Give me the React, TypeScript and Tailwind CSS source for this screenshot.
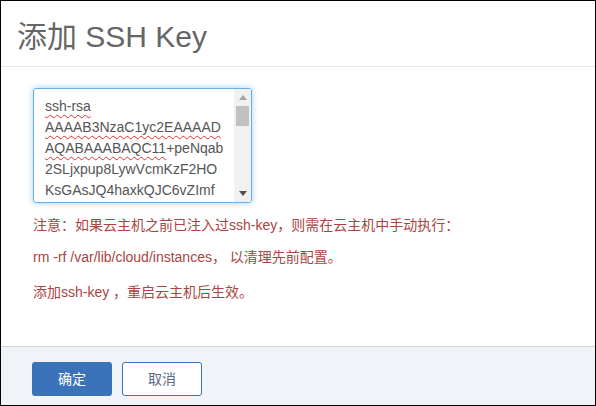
import React from "react";

const keyLines = [
  { squiggle: "ssh-rsa", rest: "" },
  { squiggle: "AAAAB3NzaC1yc2EAAAAD", rest: "" },
  { squiggle: "AQABAAABAQC11", rest: "+peNqab" },
  { squiggle: "", rest: "2SLjxpup8LywVcmKzF2HO" },
  { squiggle: "", rest: "KsGAsJQ4haxkQJC6vZImf" },
  { squiggle: "", rest: "dm0oh6Y7ZwuJF8bzSumDakk" },
];

function KeyField() {
  return (
    <div className="flex h-[115px] w-[219px] overflow-hidden rounded-[3px] border border-[#66afe9] shadow-[0_0_6px_rgba(102,175,233,0.6)]">
      <div className="flex-1 overflow-hidden pl-[11px] pt-[7px] text-[14px] leading-[21px] text-[#555]">
        {keyLines.map((l, i) => (
          <div key={i} className="whitespace-nowrap">
            {l.squiggle && (
              <span className="underline decoration-wavy decoration-[#e0312f] decoration-1 underline-offset-[3px]">
                {l.squiggle}
              </span>
            )}
            {l.rest}
          </div>
        ))}
      </div>
      {/* fake classic scrollbar */}
      <div className="flex w-[17px] flex-col items-center bg-[#f1f1f1]">
        <div className="flex h-[17px] items-center justify-center">
          <svg width="8" height="5" viewBox="0 0 8 5">
            <path d="M0 5 L4 0 L8 5 Z" fill="#a3a3a3" />
          </svg>
        </div>
        <div className="h-[20px] w-[13px] bg-[#c1c1c1]" />
        <div className="flex-1" />
        <div className="flex h-[17px] items-center justify-center">
          <svg width="8" height="5" viewBox="0 0 8 5">
            <path d="M0 0 L8 0 L4 5 Z" fill="#505050" />
          </svg>
        </div>
      </div>
    </div>
  );
}

export default function App() {
  return (
    <div
      className="flex h-[406px] w-[596px] flex-col border border-black bg-white"
      style={{ fontFamily: '"Liberation Sans", Arial, "Noto Sans CJK SC", sans-serif' }}
    >
      <div className="flex h-[66px] items-center border-b border-[#e5e5e5] pl-[16px]">
        <h1 className="pt-[6px] text-[30px] font-normal leading-none text-[#666]">添加 SSH Key</h1>
      </div>

      <div className="flex flex-1 flex-col pl-[32px] pt-[21px]">
        <KeyField />
        <div className="mt-[12px] text-[14px] leading-[20px] text-[#a94442]">
          <p className="mb-[12px]">注意：如果云主机之前已注入过ssh-key，则需在云主机中手动执行：</p>
          <p className="mb-[15px]">rm -rf /var/lib/cloud/instances， 以清理先前配置。</p>
          <p>添加ssh-key ，重启云主机后生效。</p>
        </div>
      </div>

      <div className="flex h-[59px] items-start gap-[10px] border-t border-[#d4d4d4] bg-[#f0f3f8] pl-[31px] pt-[15px]">
        <button className="h-[34px] w-[80px] rounded-[3px] bg-[#3a73b9] text-[14px] text-white">确定</button>
        <button className="h-[34px] w-[80px] rounded-[3px] border border-[#3a73b9] bg-white text-[14px] text-[#5b6b82]">
          取消
        </button>
      </div>
    </div>
  );
}
